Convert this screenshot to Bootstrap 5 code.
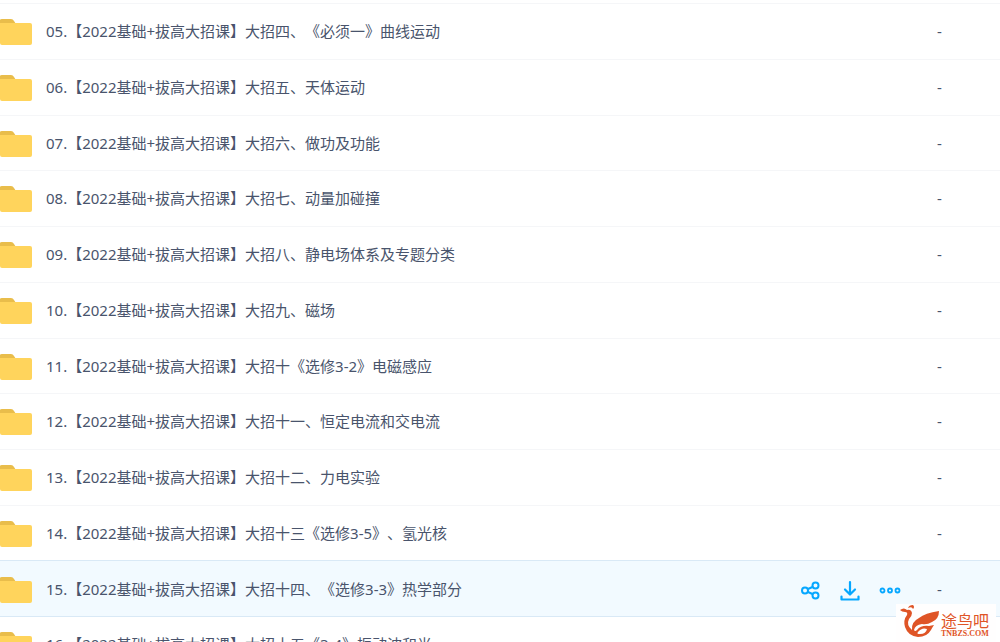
<!DOCTYPE html>
<html lang="zh-CN">
<head>
<meta charset="utf-8">
<meta name="viewport" content="width=device-width, initial-scale=1">
<title>文件列表</title>
<link href="https://cdn.jsdelivr.net/npm/bootstrap@5.3.0/dist/css/bootstrap.min.css" rel="stylesheet">
<style>
  body { font-family: "Noto Sans", "Noto Sans CJK SC", sans-serif; font-size: 15px; line-height: 24px; color: #49546c; text-spacing-trim: space-all; }
  .file-list { padding-top: 3px; }
  .file-row { height: 56px; border-top: 1px solid #f5f6f8; padding-bottom: 2px; }
  .file-row:nth-child(4n+3) { height: 55px; padding-bottom: 0; }
  .file-row.is-hover { background: #f2faff; border-top-color: #d9e9f6; margin-top: -1px; height: 56px; }
  .file-row.is-hover + .file-row { border-top-color: #d9e9f6; }
  .folder { width: 32px; height: 26px; margin-top: 2px; }
  .file-link { color: inherit; margin-left: 14px; }
  .size-col { width: 63px; }
  .actions { gap: 16px; margin-right: 35px; padding-top: 2px; }
  .actions button { width: 24px; height: 24px; color: #06a7ff; }
  .site-mark { right: 4px; bottom: 0; width: 100px; height: 38px; background: #fffefe; color: #df5426; }
  .mark-cn { font-family: "Noto Sans CJK SC", sans-serif; font-size: 16px; line-height: 16px; }
  .mark-en { font-family: "Liberation Serif", serif; font-size: 8px; line-height: 12px; }
</style>
</head>
<body>
<svg class="d-none" aria-hidden="true">
  <symbol id="folder" viewBox="0 0 32 26">
    <path d="M0 8V1Q0 0 2 0H11Q13 0 14 2L16 5V8Z" fill="#e9bd4b"/>
    <path d="M0 4H30Q32 4 32 6V24Q32 26 30 26H2Q0 26 0 24Z" fill="#ffd45c"/>
  </symbol>
</svg>
<main class="vh-100 overflow-hidden position-relative">
  <ul class="file-list list-unstyled mb-0">
    <li class="file-row d-flex align-items-center"><svg class="folder flex-shrink-0"><use href="#folder"/></svg><a class="file-link text-decoration-none flex-grow-1 text-truncate" href="#">05.【2022基础+拔高大招课】大招四、《必须一》曲线运动</a><span class="size-col flex-shrink-0">-</span></li>
    <li class="file-row d-flex align-items-center"><svg class="folder flex-shrink-0"><use href="#folder"/></svg><a class="file-link text-decoration-none flex-grow-1 text-truncate" href="#">06.【2022基础+拔高大招课】大招五、天体运动</a><span class="size-col flex-shrink-0">-</span></li>
    <li class="file-row d-flex align-items-center"><svg class="folder flex-shrink-0"><use href="#folder"/></svg><a class="file-link text-decoration-none flex-grow-1 text-truncate" href="#">07.【2022基础+拔高大招课】大招六、做功及功能</a><span class="size-col flex-shrink-0">-</span></li>
    <li class="file-row d-flex align-items-center"><svg class="folder flex-shrink-0"><use href="#folder"/></svg><a class="file-link text-decoration-none flex-grow-1 text-truncate" href="#">08.【2022基础+拔高大招课】大招七、动量加碰撞</a><span class="size-col flex-shrink-0">-</span></li>
    <li class="file-row d-flex align-items-center"><svg class="folder flex-shrink-0"><use href="#folder"/></svg><a class="file-link text-decoration-none flex-grow-1 text-truncate" href="#">09.【2022基础+拔高大招课】大招八、静电场体系及专题分类</a><span class="size-col flex-shrink-0">-</span></li>
    <li class="file-row d-flex align-items-center"><svg class="folder flex-shrink-0"><use href="#folder"/></svg><a class="file-link text-decoration-none flex-grow-1 text-truncate" href="#">10.【2022基础+拔高大招课】大招九、磁场</a><span class="size-col flex-shrink-0">-</span></li>
    <li class="file-row d-flex align-items-center"><svg class="folder flex-shrink-0"><use href="#folder"/></svg><a class="file-link text-decoration-none flex-grow-1 text-truncate" href="#">11.【2022基础+拔高大招课】大招十《选修3-2》电磁感应</a><span class="size-col flex-shrink-0">-</span></li>
    <li class="file-row d-flex align-items-center"><svg class="folder flex-shrink-0"><use href="#folder"/></svg><a class="file-link text-decoration-none flex-grow-1 text-truncate" href="#">12.【2022基础+拔高大招课】大招十一、恒定电流和交电流</a><span class="size-col flex-shrink-0">-</span></li>
    <li class="file-row d-flex align-items-center"><svg class="folder flex-shrink-0"><use href="#folder"/></svg><a class="file-link text-decoration-none flex-grow-1 text-truncate" href="#">13.【2022基础+拔高大招课】大招十二、力电实验</a><span class="size-col flex-shrink-0">-</span></li>
    <li class="file-row d-flex align-items-center"><svg class="folder flex-shrink-0"><use href="#folder"/></svg><a class="file-link text-decoration-none flex-grow-1 text-truncate" href="#">14.【2022基础+拔高大招课】大招十三《选修3-5》、氢光核</a><span class="size-col flex-shrink-0">-</span></li>
    <li class="file-row is-hover d-flex align-items-center"><svg class="folder flex-shrink-0"><use href="#folder"/></svg><a class="file-link text-decoration-none flex-grow-1 text-truncate" href="#">15.【2022基础+拔高大招课】大招十四、《选修3-3》热学部分</a>
      <div class="actions d-flex flex-shrink-0">
        <button type="button" class="btn p-0 border-0 d-flex" aria-label="分享"><svg width="24" height="24" viewBox="0 0 24 24" fill="none" stroke="currentColor" stroke-width="2"><circle cx="7" cy="12.5" r="3"/><circle cx="17.5" cy="7.5" r="3"/><circle cx="17.5" cy="17.5" r="3"/><path d="M10 11L14.5 9M10 14L14.5 16"/></svg></button>
        <button type="button" class="btn p-0 border-0 d-flex" aria-label="下载"><svg width="24" height="24" viewBox="0 0 24 24" fill="none" stroke="currentColor" stroke-width="2.2" stroke-linecap="round" stroke-linejoin="round"><path d="M12 4V16M7 11.5L12 16.5L17 11.5M3.5 18.5V21.5H20.5V18.5"/></svg></button>
        <button type="button" class="btn p-0 border-0 d-flex" aria-label="更多"><svg width="24" height="24" viewBox="0 0 24 24" fill="none" stroke="currentColor" stroke-width="1.8"><circle cx="4.5" cy="12.5" r="2"/><circle cx="12" cy="12.5" r="2"/><circle cx="19.5" cy="12.5" r="2"/></svg></button>
      </div><span class="size-col flex-shrink-0">-</span></li>
    <li class="file-row d-flex align-items-center"><svg class="folder flex-shrink-0"><use href="#folder"/></svg><a class="file-link text-decoration-none flex-grow-1 text-truncate" href="#">16.【2022基础+拔高大招课】大招十五《3-4》振动波和光</a><span class="size-col flex-shrink-0">-</span></li>
  </ul>
  <div class="site-mark position-absolute d-flex">
    <svg class="flex-shrink-0" width="45" height="38" viewBox="0 0 45 38" fill="currentColor" aria-hidden="true">
      <path d="M4 6Q8 3 11 6Q15 5 16 9Q16 12 13 15Q10 21 16 26Q15 18 23 14Q29 9 43 7Q43 15 36 18Q31 21 26 20Q19 21 18 26Q19 28 21 26Q25 21 33 22L38 21Q36 24 35 26Q31 33 22 33Q12 32 9 23Q7 16 11 11Q12 8 9 8Q6 8 4 6Z"/>
      <path d="M22 28Q26 23 31 25Q30 30 24 30Q20 30 22 28Z" fill="#fffefe"/>
      <path d="M12 4Q13 1 17 1Q19 3 17 5Q16 2 12 4Z"/>
    </svg>
    <div class="pt-2">
      <div class="mark-cn">途鸟吧</div>
      <div class="mark-en fw-bold">TNBZS.COM</div>
    </div>
  </div>
</main>
<script src="https://cdn.jsdelivr.net/npm/bootstrap@5.3.0/dist/js/bootstrap.bundle.min.js"></script>
</body>
</html>
